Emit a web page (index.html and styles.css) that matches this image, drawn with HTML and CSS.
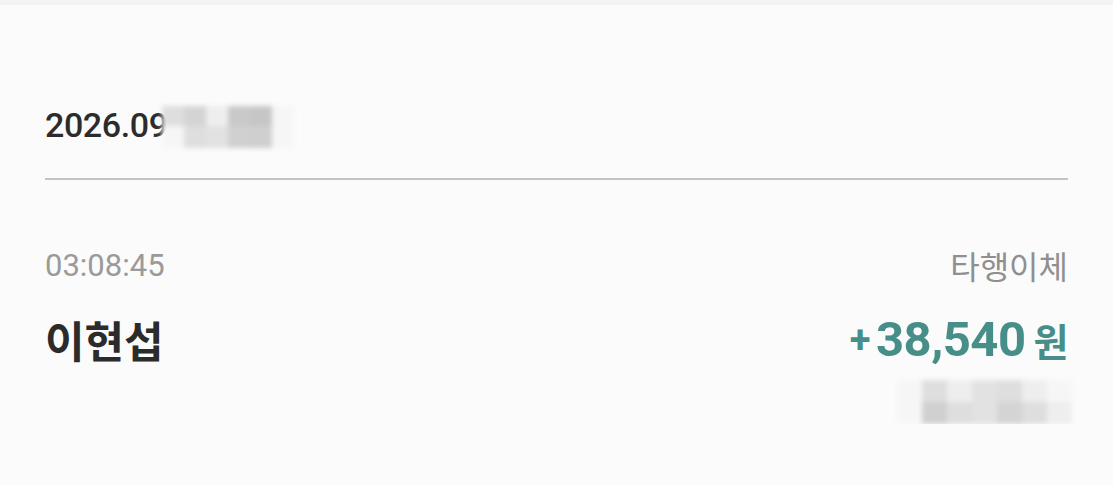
FILE: index.html
```html
<!DOCTYPE html>
<html lang="ko">

<head>
  <meta charset="UTF-8" />
  <meta name="viewport" content="width=device-width, initial-scale=1.0" />
  <title>거래내역</title>
  <link rel="stylesheet" href="styles.css">
</head>

<body>
  <div class="top-strip"></div>

  <main class="history">
    <div class="day-head">
      <span class="date">2026.09</span>
      <span class="mask mask-date">
        <i class="m3"></i><i class="m2"></i><i class="m1"></i><i class="m4"></i><i class="m9"></i><i class="m5"></i>
        <i class="m5"></i><i class="m3"></i><i class="m6"></i><i class="m7"></i><i class="m8"></i><i class="m5"></i>
      </span>
    </div>

    <div class="tx">
      <div class="tx-row">
        <span class="time">03:08:45</span>
        <span class="kind">타행이체</span>
      </div>
      <div class="tx-row main">
        <span class="name">이현섭</span>
        <span class="amount"><span class="sign">+</span>38,540<span class="won">원</span></span>
      </div>
      <div class="tx-row end">
        <span class="mask mask-balance">
          <i class="m5"></i><i class="m3"></i><i class="m1"></i><i class="m6"></i><i class="m3"></i><i class="m1"></i><i class="m5"></i>
          <i class="m5"></i><i class="m7"></i><i class="m3"></i><i class="m6"></i><i class="m2"></i><i class="m3"></i><i class="m1"></i>
        </span>
      </div>
    </div>
  </main>
</body>

</html>
```

FILE: styles.css
```css
body {
  margin: 0;
  padding: 0;
  background-color: #fafbfa;
  font-family: Roboto, "Noto Sans CJK KR", sans-serif;
  color: #2a2a2a;
  overflow: hidden;
}

.top-strip {
  height: 5px;
  background-color: #f2f3f5;
}

.history {
  padding: 0 45px;
}

.day-head {
  display: flex;
  align-items: center;
  height: 175px;
  padding-top: 66px;
  box-sizing: border-box;
  border-bottom: 2px solid #c4c4c4;
}

.date {
  font-size: 34px;
  font-weight: 500;
  letter-spacing: -0.4px;
  color: #2c2c2c;
}

/* pixelated privacy blur */
.mask {
  display: grid;
  filter: blur(2.5px);
}

.mask i {
  display: block;
}

.mask-date {
  grid-template-columns: repeat(6, 22px);
  grid-template-rows: 20px 22px;
  margin-left: -6px;
  margin-top: 4px;
}

.mask-balance {
  grid-template-columns: repeat(7, 25px);
  grid-template-rows: 22px 22px;
  margin-right: -4px;
}

.m1 { background: #eeeeee; }
.m2 { background: #d4d4d4; }
.m3 { background: #dedede; }
.m4 { background: #c9c9c9; }
.m5 { background: #f6f6f6; }
.m6 { background: #e2e2e2; }
.m7 { background: #d0d0d0; }
.m8 { background: #cfcfcf; }
.m9 { background: #c6c6c6; }

.tx {
  padding-top: 62px;
}

.tx-row {
  display: flex;
  justify-content: space-between;
  align-items: center;
}

.time {
  font-size: 31px;
  color: #9a9a9a;
}

.kind {
  font-size: 32px;
  color: #8f8f8f;
}

.tx-row.main {
  margin-top: 20px;
}

.name {
  font-size: 43px;
  font-weight: 700;
  color: #2b2b2b;
}

.amount {
  font-size: 49px;
  font-weight: 700;
  color: #468e87;
  letter-spacing: -0.5px;
}

.sign {
  font-size: 38px;
  margin-right: 6px;
  vertical-align: 3px;
}

.won {
  font-family: "Noto Sans CJK KR", sans-serif;
  font-size: 38px;
  margin-left: 8px;
}

.tx-row.end {
  justify-content: flex-end;
  margin-top: 10px;
}
```
